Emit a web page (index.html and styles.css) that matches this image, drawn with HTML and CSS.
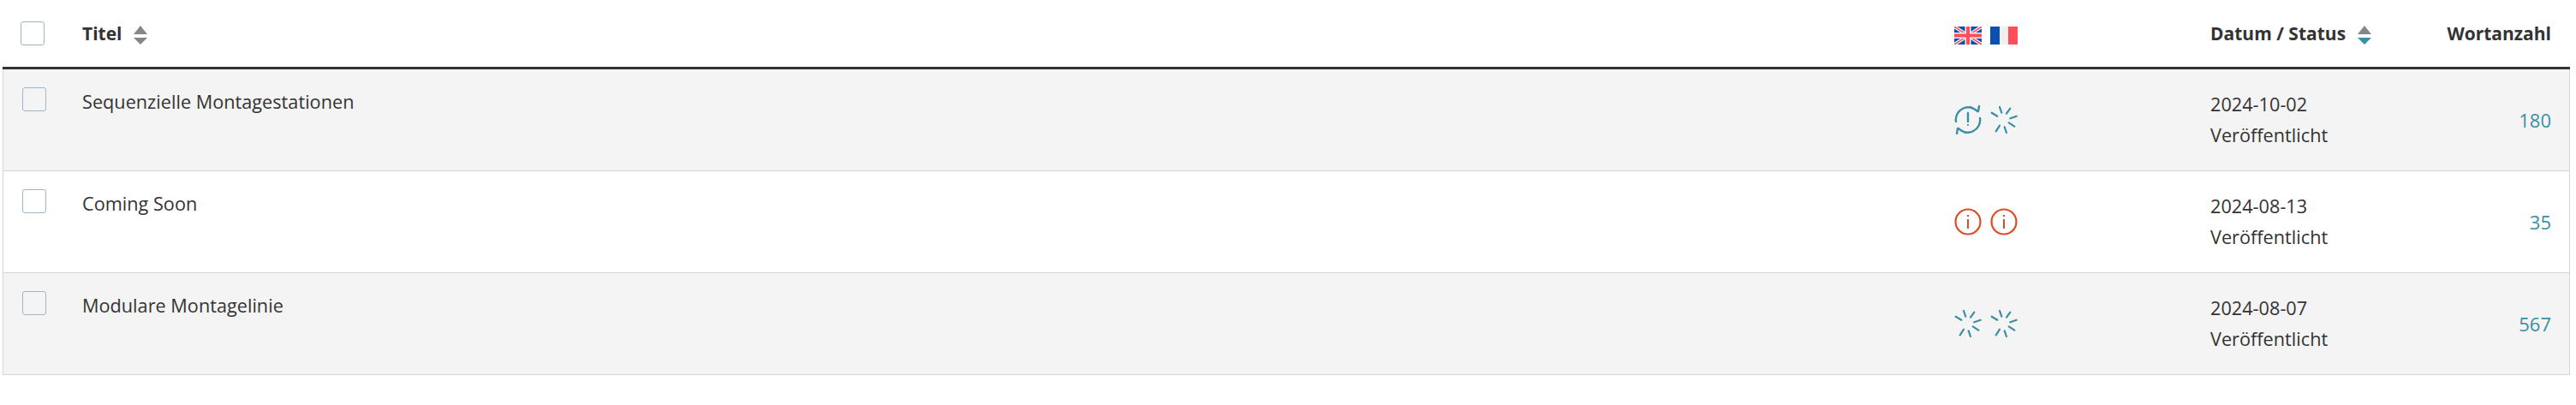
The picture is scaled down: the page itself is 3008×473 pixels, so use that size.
FILE: index.html
```html
<!DOCTYPE html>
<html lang="de">
<head>
    <meta charset="utf-8">
    <title>Seiten</title>
    <link rel="stylesheet" href="styles.css">
</head>
<body>
    <svg class="defs" width="0" height="0">
        <symbol id="spin" viewBox="-17 -17 34 34">
            <path d="M-14.3-8.3-7.7-4.3M-5-15-2.7-8.3M3-7.3 7.3-13.3M7.3-1.7 14.7-4.3M5.7 3.3 12.3 7.7M.7 8.3 3 15M-5 6.7-9.3 13.3" fill="none" stroke="#3a8fa8" stroke-width="2.2" stroke-linecap="round"/>
        </symbol>
        <symbol id="info" viewBox="-17 -17 34 34">
            <circle r="14.5" fill="none" stroke="#dd4b27" stroke-width="2.2"/>
            <path d="M0-3V8" stroke="#dd4b27" stroke-width="2"/>
            <path d="M0-8V-6" stroke="#dd4b27" stroke-width="2"/>
        </symbol>
        <symbol id="sync" viewBox="-17 -17 34 34">
            <g fill="none" stroke="#3a8fa8" stroke-width="2.4" stroke-linecap="round" stroke-linejoin="round">
                <path d="M-14 2A14.5 14.5 0 0 1 11-10M3-15 12-10 13-16"/>
                <path d="M14-2A14.5 14.5 0 0 1-11 10M-3 15-12 10-13 16"/>
                <path d="M0-8V2"/>
            </g>
            <circle cx="0" cy="6" r="1.1" fill="#3a8fa8"/>
        </symbol>
    </svg>

    <table class="list">
        <colgroup>
            <col class="col-check">
            <col class="col-title">
            <col class="col-lang">
            <col class="col-date">
            <col class="col-count">
        </colgroup>
        <thead>
            <tr>
                <th><span class="check check-head"></span></th>
                <th>Titel <span class="sort"><i class="up"></i><i class="down"></i></span></th>
                <th class="flags">
                    <svg class="flag" viewBox="0 0 32 21">
                        <rect width="32" height="21" fill="#0b4fb0"/>
                        <path d="M0 0 32 21M32 0 0 21" stroke="#f2eef0" stroke-width="4"/>
                        <path d="M0 0 32 21M32 0 0 21" stroke="#ff4d5a" stroke-width="1.5"/>
                        <path d="M16 0V21M0 10.5H32" stroke="#f2eef0" stroke-width="7"/>
                        <path d="M16 0V21M0 10.5H32" stroke="#ff4d5a" stroke-width="4"/>
                    </svg>
                    <svg class="flag" viewBox="0 0 32 21">
                        <rect width="11" height="21" fill="#0b4fb0"/>
                        <rect x="11" width="10" height="21" fill="#f0f0f0"/>
                        <rect x="21" width="11" height="21" fill="#ff4d5a"/>
                    </svg>
                </th>
                <th>Datum / Status <span class="sort"><i class="up"></i><i class="down on"></i></span></th>
                <th class="num">Wortanzahl</th>
            </tr>
        </thead>
        <tbody>
            <tr class="alt">
                <td><span class="check"></span></td>
                <td class="title">Sequenzielle Montagestationen</td>
                <td class="flags"><svg class="ico"><use href="#sync"/></svg><svg class="ico"><use href="#spin"/></svg></td>
                <td class="date">2024-10-02<br>Veröffentlicht</td>
                <td class="num"><a href="#">180</a></td>
            </tr>
            <tr>
                <td><span class="check"></span></td>
                <td class="title">Coming Soon</td>
                <td class="flags"><svg class="ico"><use href="#info"/></svg><svg class="ico"><use href="#info"/></svg></td>
                <td class="date">2024-08-13<br>Veröffentlicht</td>
                <td class="num"><a href="#">35</a></td>
            </tr>
            <tr class="alt">
                <td><span class="check"></span></td>
                <td class="title">Modulare Montagelinie</td>
                <td class="flags"><svg class="ico"><use href="#spin"/></svg><svg class="ico"><use href="#spin"/></svg></td>
                <td class="date">2024-08-07<br>Veröffentlicht</td>
                <td class="num"><a href="#">567</a></td>
            </tr>
        </tbody>
    </table>
</body>
</html>
```

FILE: styles.css
```css
body {
    margin: 0;
    padding-left: 3px;
    font-family: "Open Sans", Arial, sans-serif;
    font-size: 21.7px;
    line-height: 36px;
    color: #333;
    background-color: #fff;
}

.defs {
    display: block;
    height: 0;
}

.list {
    width: 2998px;
    table-layout: fixed;
    border-collapse: separate;
    border-spacing: 0;
}

.col-check {
    width: 83px;
}

.col-lang {
    width: 299px;
}

.col-date {
    width: 270px;
}

.col-count {
    width: 160px;
}

th {
    height: 81px;
    padding: 0 0 0 10px;
    box-sizing: border-box;
    border-bottom: 3px solid #333;
    font-size: 21px;
    text-align: left;
    font-weight: 700;
    white-space: nowrap;
    vertical-align: middle;
}

th.num {
    padding: 0 22px 0 0;
    text-align: right;
}

th.flags {
    padding-top: 4px;
}

td {
    height: 118px;
    padding: 0 0 0 10px;
    box-sizing: content-box;
    border-bottom: 1px solid #d5d5d5;
    vertical-align: middle;
}

td:first-child {
    padding: 21px 0 0 22px;
    height: 97px;
    border-left: 1px solid #d5d5d5;
    vertical-align: top;
}

td:last-child {
    border-right: 1px solid #d5d5d5;
}

th:first-child {
    padding-left: 22px;
}

.alt td {
    background-color: #f4f4f4;
}

td.title {
    padding-top: 20px;
    height: 98px;
    vertical-align: top;
}

td.num {
    padding: 0 21px 0 0;
    text-align: right;
}

td.num a {
    color: #3a8fa8;
    text-decoration: none;
    font-size: 22px;
}

.check {
    display: block;
    width: 28px;
    height: 28px;
    box-sizing: border-box;
    border: 1px solid #9db8c4;
    border-radius: 3px;
}

.check-head {
    background-color: #fff;
    margin-left: -1px;
}

.sort {
    display: inline-flex;
    flex-direction: column;
    gap: 4px;
    margin-left: 8px;
    vertical-align: 7px;
}

.sort i {
    display: block;
    width: 0;
    height: 0;
    border-left: 8px solid transparent;
    border-right: 8px solid transparent;
}

.sort .up {
    border-bottom: 10px solid #82878c;
}

.sort .down {
    border-top: 8px solid #82878c;
}

.sort .down.on {
    border-top-color: #3a8fa8;
}

.flags {
    font-size: 0;
    line-height: 0;
}

.flag {
    width: 32px;
    height: 21px;
    margin-right: 10px;
}

.ico {
    width: 34px;
    height: 34px;
    margin: 0 9px 0 -1px;
}
```
